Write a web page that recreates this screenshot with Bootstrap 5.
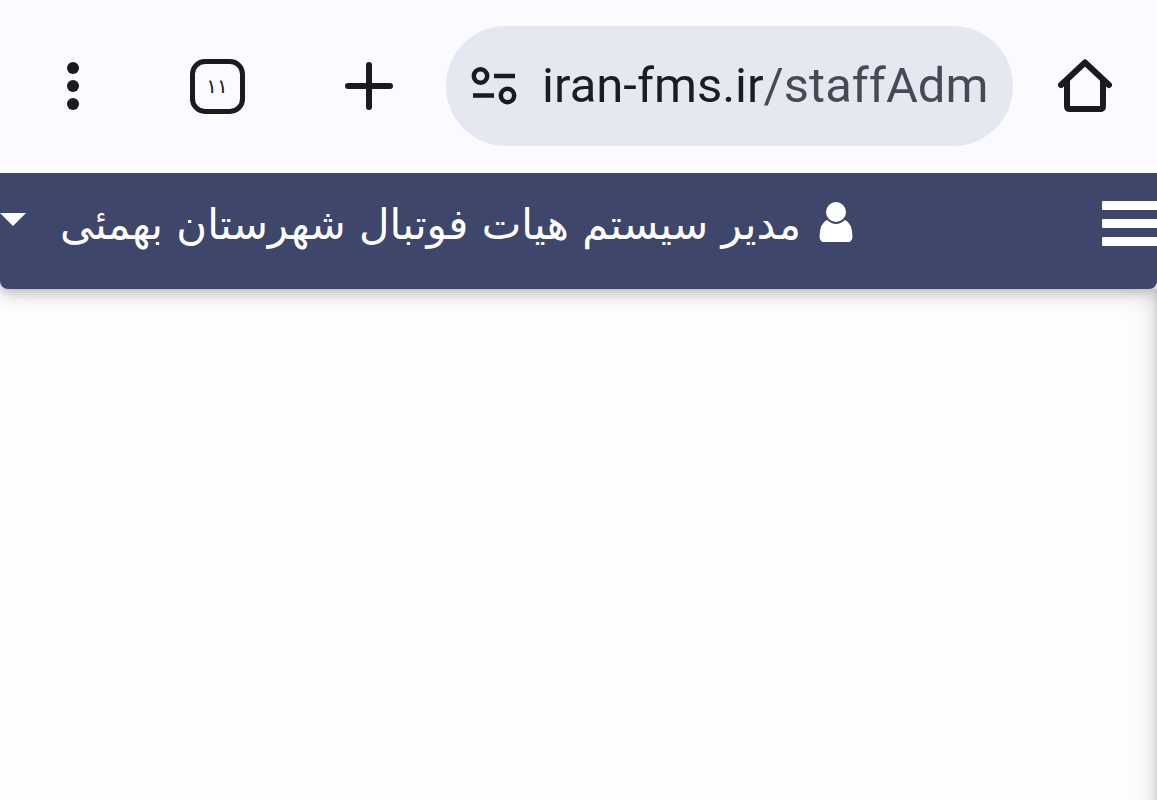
<!DOCTYPE html>
<html lang="fa">
<head>
<meta charset="utf-8">
<meta name="viewport" content="width=device-width, initial-scale=1">
<title>iran-fms.ir</title>
<link href="https://cdn.jsdelivr.net/npm/bootstrap@5.3.0/dist/css/bootstrap.min.css" rel="stylesheet">
<style>
  body { background: #fefefe; overflow-x: hidden; }
  svg { display: block; }
  .browser-bar { background: #fafaff; padding: 26px 40px 27px 42px; color: #1a1a22; position: relative; z-index: 1; }
  .tool-btn { width: 64px; height: 64px; color: inherit; }
  .tab-count { width: 55px; height: 55px; border: 5px solid #1a1a22; border-radius: 15px; font: 20px/1 "DejaVu Sans", sans-serif; color: #1a1a22; background: transparent; }
  .address { background: #e5e8f1; height: 120px; padding: 0 24px; gap: 24px; margin: 0 40px 0 46px; min-width: 0; flex: 0 1 49vw; }
  .address input {
    font: 49px/62px Roboto, sans-serif; color: #1c1c25; min-width: 0; outline: 0;
    background: linear-gradient(90deg, #1c1c25 222px, #464a54 222px);
    -webkit-background-clip: text; background-clip: text; -webkit-text-fill-color: transparent;
  }
  .app-bar { position: relative; background: #3e466b; height: 116px; border-radius: 0 0 8px 8px; box-shadow: 0 6px 26px rgba(0, 0, 0, .12), 0 3px 12px rgba(50, 60, 50, .28); }
  .account { font: 42px/64px "DejaVu Sans", sans-serif; color: #fff; padding: 0; gap: 18px; margin-top: 20px; }
  .account:hover { color: #fff; }
  .account .caret { margin-right: 16px; }
  .account svg { margin-bottom: 6px; }
  .menu-btn { margin-top: 28px; }
  .content { background: linear-gradient(270deg, #d6d6d6, #ebebeb 5px, #f7f7f7 12px, #fcfcfc 20px, #fefefe 32px); }
</style>
</head>
<body class="d-flex flex-column min-vh-100">
<header class="browser-bar d-flex align-items-center" dir="ltr">
  <button class="tool-btn btn border-0 p-0 flex-shrink-0" aria-label="More options">
    <svg width="64" height="64" fill="currentColor"><circle cx="31" cy="14" r="6"/><circle cx="31" cy="32" r="6"/><circle cx="31" cy="50" r="6"/></svg>
  </button>
  <button class="tab-count p-0 ms-auto me-2 flex-shrink-0">۱۱</button>
  <button class="tool-btn btn border-0 p-0 ms-auto flex-shrink-0" aria-label="New tab">
    <svg width="64" height="64" fill="none" stroke="currentColor" stroke-width="6" stroke-linecap="round"><path d="M12 32H54M33 11V53"/></svg>
  </button>
  <div class="address rounded-pill d-flex align-items-center">
    <svg class="flex-shrink-0" width="48" height="44" fill="none" stroke="#1a1a22" stroke-width="4.500"><circle cx="10.500" cy="12" r="6.700"/><path d="M24 12H45M3 31.500H24"/><circle cx="37.500" cy="31.500" r="6.700"/></svg>
    <input class="border-0 p-0 w-100" type="text" aria-label="Address" value="iran-fms.ir/staffAdm">
  </div>
  <button class="tool-btn btn border-0 p-0 flex-shrink-0" aria-label="Home">
    <svg width="64" height="64" fill="none" stroke="currentColor" stroke-width="6" stroke-linecap="round" stroke-linejoin="round"><path d="M8 31L32 8.500L56 31"/><path d="M14 27V52Q14 55 17 55H47Q50 55 50 52V27"/></svg>
  </button>
</header>
<nav class="app-bar d-flex align-items-start justify-content-between" dir="rtl">
  <button class="menu-btn btn border-0 p-0 rounded-0" aria-label="منو">
    <svg width="55" height="45" fill="#fff"><rect width="60" height="9" rx="1"/><rect y="18" width="60" height="9" rx="1"/><rect y="36" width="60" height="9" rx="1"/></svg>
  </button>
  <button class="account btn border-0 d-flex align-items-center text-nowrap">
    <svg width="34" height="40" viewBox="0 0 34 40" fill="#fff"><circle cx="17" cy="10" r="10"/><path d="M8 18Q17 26 26 18Q33 21 33.500 34Q33.500 39 30 40H4Q.5 39 .5 34Q1 21 8 18Z"/></svg>
    <span>مدیر سیستم هیات فوتبال شهرستان بهمئی</span>
    <svg class="caret" width="26" height="26" fill="#fff"><path d="M0 4H26L13 17Z"/></svg>
  </button>
</nav>
<main class="content flex-grow-1"></main>
<script src="https://cdn.jsdelivr.net/npm/bootstrap@5.3.0/dist/js/bootstrap.bundle.min.js"></script>
</body>
</html>
